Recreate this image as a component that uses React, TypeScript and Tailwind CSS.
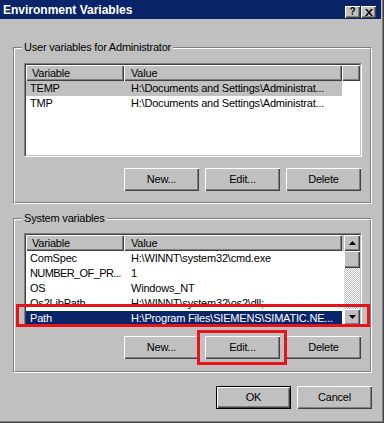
const userVars = [
  { name: "TEMP", value: "H:\\Documents and Settings\\Administrat...", selected: "inactive" },
  { name: "TMP", value: "H:\\Documents and Settings\\Administrat...", selected: "" },
];

const systemVars = [
  { name: "ComSpec", value: "H:\\WINNT\\system32\\cmd.exe", selected: "" },
  { name: "NUMBER_OF_PR...", value: "1", selected: "" },
  { name: "OS", value: "Windows_NT", selected: "" },
  { name: "Os2LibPath", value: "H:\\WINNT\\system32\\os2\\dll;", selected: "" },
  { name: "Path", value: "H:\\Program Files\\SIEMENS\\SIMATIC.NE...", selected: "active" },
];

const raised =
  "shadow-[inset_1px_1px_#ffffff,inset_-1px_-1px_#404040,inset_-2px_-2px_#808080]";

type Row = { name: string; value: string; selected: string };

const Button = ({ label, isDefault }: { label: string; isDefault?: boolean }) => {
  if (isDefault) {
    return (
      <div className="w-[75px] h-[23px] border border-black">
        <div className={`h-full flex items-center justify-center bg-[#c0c0c0] ${raised}`}>{label}</div>
      </div>
    );
  }
  return (
    <div className={`w-[75px] h-[23px] flex items-center justify-center bg-[#c0c0c0] ${raised}`}>
      {label}
    </div>
  );
};

const Arrow = ({ up }: { up?: boolean }) => (
  <svg width="7" height="4" viewBox="0 0 7 4">
    <polygon points={up ? "0,4 7,4 3.5,0" : "0,0 7,0 3.5,4"} fill="#000" />
  </svg>
);

const ListView = ({ rows, scroll }: { rows: Row[]; scroll?: boolean }) => {
  return (
    <div className="h-[94px] border border-t-[#808080] border-l-[#808080] border-r-white border-b-white">
      <div className="h-full flex overflow-hidden bg-white border border-t-[#404040] border-l-[#404040] border-r-[#c0c0c0] border-b-[#c0c0c0]">
        <div className="flex-1 min-w-0 flex flex-col">
          <div className="flex h-[16px] shrink-0 bg-[#c0c0c0]">
            <div className={`w-[98px] pl-[6px] flex items-center ${raised}`}>Variable</div>
            <div className={`w-[218px] pl-[7px] flex items-center ${raised}`}>Value</div>
            {!scroll && <div className={`flex-1 ${raised}`}></div>}
          </div>
          {rows.map((row, index) => (
            <div
              key={index}
              className={`flex h-[15px] shrink-0 w-[316px] items-center whitespace-nowrap ${
                row.selected === "active"
                  ? "bg-[#0a246a] text-white"
                  : row.selected === "inactive"
                  ? "bg-[#c0c0c0]"
                  : ""
              }`}
            >
              <div className={`w-[98px] pl-[4px] ${row.name.length > 12 ? "tracking-[-0.6px]" : ""}`}>
                {row.name}
              </div>
              <div className="w-[218px] pl-[7px] overflow-hidden">{row.value}</div>
            </div>
          ))}
        </div>
        {scroll && (
          <div className="w-[16px] flex flex-col shrink-0">
            <div className={`h-[16px] flex items-center justify-center bg-[#c0c0c0] ${raised}`}>
              <Arrow up />
            </div>
            <div className={`h-[17px] bg-[#c0c0c0] ${raised}`}></div>
            <div className="flex-1 bg-[repeating-conic-gradient(#c0c0c0_0_25%,#ffffff_0_50%)] bg-[length:2px_2px]"></div>
            <div className={`h-[16px] flex items-center justify-center bg-[#c0c0c0] ${raised}`}>
              <Arrow />
            </div>
          </div>
        )}
      </div>
    </div>
  );
};

const GroupBox = ({
  title,
  className,
  children,
}: {
  title: string;
  className: string;
  children: React.ReactNode;
}) => (
  <div className={`relative border border-t-[#808080] border-l-[#808080] border-r-white border-b-white ${className}`}>
    <div className="h-full flex flex-col border border-t-white border-l-white border-r-[#808080] border-b-[#808080] pl-[9px] pr-[8px]">
      {children}
    </div>
    <span className="absolute left-[8px] top-[-7px] px-[2px] leading-[13px] bg-[#c0c0c0]">{title}</span>
  </div>
);

const ButtonRow = () => (
  <div className="flex justify-end gap-[6px] pr-[1px]">
    <Button label="New..." />
    <Button label="Edit..." />
    <Button label="Delete" />
  </div>
);

export default function App() {
  return (
    <div className="w-[384px] h-[423px] border-r border-b border-[#404040] font-['Liberation_Sans',Arial,sans-serif] text-[11px] leading-[13px] tracking-[-0.2px] text-black select-none">
      <div className="relative h-full flex flex-col bg-[#c0c0c0] border-r border-b border-[#808080]">
        <div className="h-[19px] mr-[1px] bg-[#0a246a] flex items-start justify-between">
          <span className="pl-[3px] pt-[3px] font-bold text-white text-[12px] leading-[14px] tracking-normal">
            Environment Variables
          </span>
          <div className="flex gap-[1px] mt-[6px] mr-[5px]">
            <div className={`w-[15px] h-[12px] bg-[#c0c0c0] flex items-center justify-center font-bold text-[10px] leading-[10px] ${raised}`}>
              ?
            </div>
            <div className={`w-[15px] h-[12px] bg-[#c0c0c0] flex items-center justify-center ${raised}`}>
              <svg width="8" height="7" viewBox="0 0 8 7">
                <path d="M0 0h2l2 2.5 2-2.5h2l-3 3.5 3 3.5h-2l-2-2.5-2 2.5h-2l3-3.5z" fill="#000" />
              </svg>
            </div>
          </div>
        </div>

        <div className="flex flex-col pl-[13px] pr-[10px] pt-[28px]">
          <GroupBox title="User variables for Administrator" className="h-[157px]">
            <div className="pt-[14px]">
              <ListView rows={userVars} />
            </div>
            <div className="mt-[11px]">
              <ButtonRow />
            </div>
          </GroupBox>

          <GroupBox title="System variables" className="h-[155px] mt-[14px]">
            <div className="pt-[13px]">
              <ListView rows={systemVars} scroll />
            </div>
            <div className="mt-[9px]">
              <ButtonRow />
            </div>
          </GroupBox>

          <div className="flex justify-end gap-[6px] mt-[13px]">
            <Button label="OK" isDefault />
            <Button label="Cancel" />
          </div>
        </div>

        <div className="absolute left-[16px] top-[304px] w-[354px] h-[23px] border-[3px] border-[#e8121a]"></div>
        <div className="absolute left-[197px] top-[330px] w-[90px] h-[35px] border-[3px] border-[#e8121a]"></div>
      </div>
    </div>
  );
}
